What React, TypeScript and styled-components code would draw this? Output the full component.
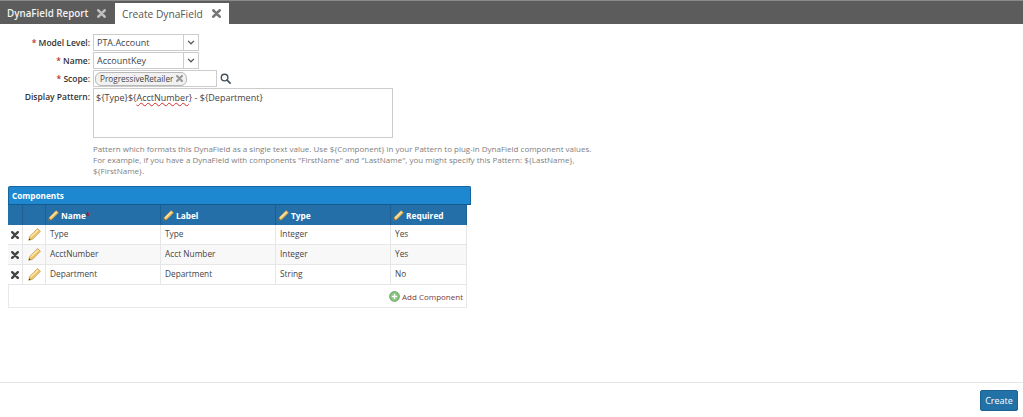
import { Fragment } from 'react';
import styled, { createGlobalStyle } from 'styled-components';

const GlobalStyle = createGlobalStyle`
  html, body { margin: 0; padding: 0; height: 100%; overflow: hidden; background: #fff; }
  body { font-family: "Open Sans", "Liberation Sans", sans-serif; font-size: 9px; color: #444; }
`;

const CloseIcon = ({ size = 9, color = '#555' }: { size?: number; color?: string }) => (
  <svg width={size} height={size} viewBox="0 0 10 10">
    <path d="M1.5 1.5 L8.5 8.5 M8.5 1.5 L1.5 8.5" stroke={color} strokeWidth="3" strokeLinecap="round" />
  </svg>
);

const Chevron = () => (
  <svg width="8" height="5" viewBox="0 0 9 6">
    <path d="M1 1 L4.5 4.5 L8 1" stroke="#555" strokeWidth="1.5" fill="none" />
  </svg>
);

const SearchIcon = () => (
  <svg width="11" height="11" viewBox="0 0 12 12">
    <circle cx="5" cy="5" r="3.6" stroke="#465059" strokeWidth="1.5" fill="none" />
    <path d="M7.8 7.8 L11 11" stroke="#465059" strokeWidth="1.8" strokeLinecap="round" />
  </svg>
);

const Pencil = ({ size = 13 }: { size?: number }) => (
  <svg width={size} height={size} viewBox="0 0 14 14">
    <path d="M10.4 0.6 L13.4 3.6 L4.8 12.2 L0.8 13.2 L1.8 9.2 Z" fill="#f0c566" stroke="#b98d3c" strokeWidth="0.7" strokeLinejoin="round" />
    <path d="M3 9.6 L10.9 2.2" stroke="#fdecc0" strokeWidth="1.3" />
    <path d="M0.8 13.2 L1.3 11.2 L2.8 12.7 Z" fill="#333" />
  </svg>
);

const AddIcon = () => (
  <svg width="11" height="11" viewBox="0 0 12 12">
    <circle cx="6" cy="6" r="5.4" fill="#86c47c" stroke="#5c9a58" strokeWidth="0.8" />
    <path d="M6 3 V9 M3 6 H9" stroke="#fff" strokeWidth="1.6" />
  </svg>
);

const Page = styled.div`
  height: 100vh;
  display: flex;
  flex-direction: column;
`;

const TabBar = styled.div`
  height: 24px;
  box-sizing: border-box;
  padding-top: 2px;
  background: #5c5c5c;
  border-top: 1px solid #8a8a8a;
  display: flex;
  flex-shrink: 0;
`;

const Tab = styled.div<{ $active?: boolean }>`
  width: ${(p) => (p.$active ? '114px' : '115px')};
  box-sizing: border-box;
  display: flex;
  align-items: center;
  gap: 9px;
  padding-left: 7px;
  font-size: ${(p) => (p.$active ? '10.2px' : '9.8px')};
  font-weight: ${(p) => (p.$active ? 400 : 600)};
  background: ${(p) => (p.$active ? '#fff' : 'transparent')};
  color: ${(p) => (p.$active ? '#555' : '#f2f2f2')};
`;

const Form = styled.div`
  padding: 10px 0 0 0;
  display: grid;
  grid-template-columns: 90px auto;
  column-gap: 3px;
  row-gap: 1px;
  justify-content: start;
`;

const Label = styled.div<{ $required?: boolean }>`
  text-align: right;
  font-size: 8.5px;
  font-weight: 600;
  color: #333;
  line-height: 17px;
  height: 17px;
  &::before {
    content: ${(p) => (p.$required ? '"* "' : 'none')};
    color: #b5352c;
  }
`;

const SelectBox = styled.div`
  width: 106px;
  height: 17px;
  box-sizing: border-box;
  border: 1px solid #ccc;
  display: flex;
  align-items: center;
  font-size: 9px;
  color: #444;
  span { flex: 1; padding-left: 3px; }
`;

const ChevronCell = styled.div`
  width: 14px;
  height: 100%;
  border-left: 1px solid #ccc;
  display: flex;
  align-items: center;
  justify-content: center;
`;

const ScopeRow = styled.div`
  display: flex;
  align-items: center;
  gap: 3px;
  height: 17px;
`;

const ScopeInput = styled.div`
  width: 124px;
  height: 17px;
  box-sizing: border-box;
  border: 1px solid #ccc;
  display: flex;
  align-items: center;
  padding-left: 1px;
`;

const Chip = styled.div`
  height: 12px;
  border: 1px solid #b8b8b8;
  border-radius: 6px;
  background: #f1f1f1;
  display: flex;
  align-items: center;
  gap: 3px;
  padding: 0 3px 0 4px;
  font-size: 8.2px;
  color: #444;
`;

const PatternBox = styled.div`
  width: 300px;
  height: 50px;
  box-sizing: border-box;
  border: 1px solid #ccc;
  padding: 2px;
  font-size: 9px;
  line-height: 13px;
  color: #444;
`;

const Misspelt = styled.span`
  text-decoration: underline wavy #d0312d 1px;
  text-underline-offset: 1px;
`;

const PatternLabel = styled(Label)`
  height: auto;
`;

const Hint = styled.div`
  grid-column: 2;
  margin-top: 4px;
  font-size: 8px;
  line-height: 11px;
  color: #808080;
  white-space: nowrap;
`;

const Panel = styled.div`
  margin: 10px 0 0 8px;
  width: 463px;
`;

const PanelTitle = styled.div`
  height: 19px;
  box-sizing: border-box;
  border: 1px solid #17659e;
  border-bottom-color: #155a8c;
  border-radius: 2px 2px 0 0;
  background: #1d87cf;
  padding-left: 3px;
  font-size: 8.2px;
  font-weight: 700;
  line-height: 18px;
  color: #fff;
`;

const Grid = styled.div`
  width: 459px;
  display: grid;
  grid-template-columns: 15px 23px 115px 115px 115px 76px;
`;

const HeadCell = styled.div`
  height: 20px;
  box-sizing: border-box;
  background: #256fa8;
  border-right: 1px solid #1d5f92;
  display: flex;
  align-items: center;
  gap: 2px;
  padding: 1px 0 0 2px;
  font-size: 8.3px;
  font-weight: 700;
  color: #fff;
  &:last-child { border-right: 0; }
  i { color: #9c1f2c; font-style: normal; margin-left: -2px; }
`;

const Cell = styled.div<{ $shade?: boolean; $icon?: boolean }>`
  height: 20px;
  box-sizing: border-box;
  background: ${(p) => (p.$shade ? '#f8f8f8' : '#fff')};
  border-right: 1px solid #e6e6e6;
  border-bottom: 1px solid #e6e6e6;
  display: flex;
  align-items: center;
  justify-content: ${(p) => (p.$icon ? 'center' : 'flex-start')};
  padding: 0 0 ${(p) => (p.$icon ? '0' : '2px')} ${(p) => (p.$icon ? '0' : '4px')};
  font-size: 8.3px;
  color: #444;
`;

const GridFoot = styled.div`
  width: 459px;
  height: 23px;
  box-sizing: border-box;
  border: 1px solid #e8e8e8;
  border-top: 0;
  display: flex;
  align-items: center;
  justify-content: flex-end;
  gap: 2px;
  padding: 1px 3px 0 0;
  font-size: 8px;
  color: #7a3b3b;
`;

const Footer = styled.div`
  margin-top: auto;
  margin-bottom: 6px;
  height: 28px;
  border-top: 1px solid #e5e5e5;
  display: flex;
  justify-content: flex-end;
  align-items: flex-end;
  padding-right: 5px;
`;

const CreateButton = styled.button`
  width: 38px;
  height: 21px;
  padding: 0;
  border: 1px solid #1c6291;
  border-radius: 2px;
  background: #2272a8;
  color: #fff;
  font-family: inherit;
  font-size: 9px;
`;

const columns = ['Name', 'Label', 'Type', 'Required'];

const rows = [
  ['Type', 'Type', 'Integer', 'Yes'],
  ['AcctNumber', 'Acct Number', 'Integer', 'Yes'],
  ['Department', 'Department', 'String', 'No'],
];

const hintLines = [
  'Pattern which formats this DynaField as a single text value. Use ${Component} in your Pattern to plug-in DynaField component values.',
  'For example, if you have a DynaField with components "FirstName" and "LastName", you might specify this Pattern: ${LastName},',
  '${FirstName}.',
];

const App = () => (
  <Page>
    <GlobalStyle />
    <TabBar>
      <Tab>
        DynaField Report <CloseIcon color="#bdbdbd" />
      </Tab>
      <Tab $active>
        Create DynaField <CloseIcon color="#777" />
      </Tab>
    </TabBar>

    <Form>
      <Label $required>Model Level:</Label>
      <SelectBox>
        <span>PTA.Account</span>
        <ChevronCell>
          <Chevron />
        </ChevronCell>
      </SelectBox>
      <Label $required>Name:</Label>
      <SelectBox>
        <span>AccountKey</span>
        <ChevronCell>
          <Chevron />
        </ChevronCell>
      </SelectBox>
      <Label $required>Scope:</Label>
      <ScopeRow>
        <ScopeInput>
          <Chip>
            ProgressiveRetailer <CloseIcon size={7} color="#999" />
          </Chip>
        </ScopeInput>
        <SearchIcon />
      </ScopeRow>
      <PatternLabel>Display Pattern:</PatternLabel>
      <PatternBox>
        {'${Type}${'}
        <Misspelt>AcctNumber</Misspelt>
        {'} - ${Department}'}
      </PatternBox>
      <Hint>
        {hintLines.map((line) => (
          <div key={line}>{line}</div>
        ))}
      </Hint>
    </Form>

    <Panel>
      <PanelTitle>Components</PanelTitle>
      <Grid>
        <HeadCell />
        <HeadCell />
        {columns.map((name, i) => (
          <HeadCell key={name}>
            <Pencil size={11} />
            {name}
            {i === 0 && <i>*</i>}
          </HeadCell>
        ))}
        {rows.map((row, r) => (
          <Fragment key={row[0]}>
            <Cell $icon $shade={r === 1}>
              <CloseIcon size={8} color="#444" />
            </Cell>
            <Cell $icon $shade={r === 1}>
              <Pencil />
            </Cell>
            {row.map((value, c) => (
              <Cell key={c} $shade={r === 1}>
                {value}
              </Cell>
            ))}
          </Fragment>
        ))}
      </Grid>
      <GridFoot>
        <AddIcon /> Add Component
      </GridFoot>
    </Panel>

    <Footer>
      <CreateButton>Create</CreateButton>
    </Footer>
  </Page>
);

export default App;
